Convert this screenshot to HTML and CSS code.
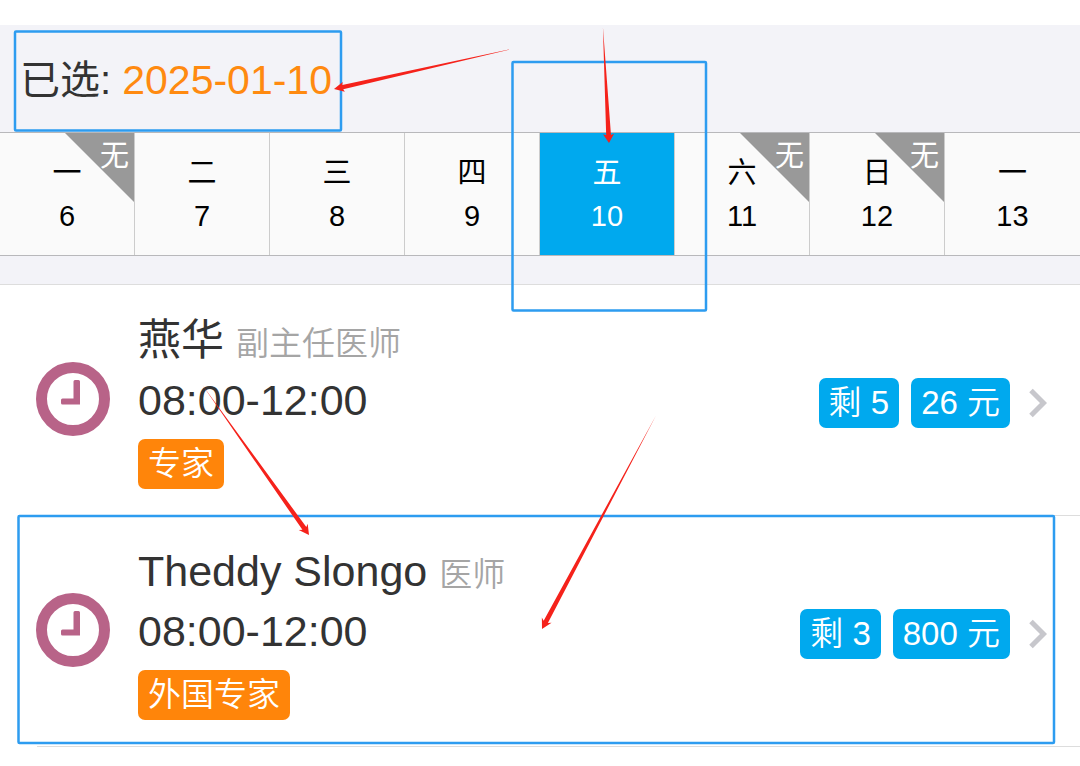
FILE: index.html
```html
<!DOCTYPE html>
<html lang="zh-Hans">
<head>
    <meta charset="UTF-8">
    <title>选择就诊时间</title>
    <meta name="viewport" content="width=device-width, initial-scale=1">
    <link rel="stylesheet" href="styles.css">
</head>
<body>
    <header class="selected">
        已选: <span class="selected-date">2025-01-10</span>
    </header>

    <nav class="week">
        <button class="day" type="button"><span>一</span><span>6</span><span class="none">无</span></button>
        <button class="day" type="button"><span>二</span><span>7</span></button>
        <button class="day" type="button"><span>三</span><span>8</span></button>
        <button class="day" type="button"><span>四</span><span>9</span></button>
        <button class="day active" type="button"><span>五</span><span>10</span></button>
        <button class="day" type="button"><span>六</span><span>11</span><span class="none">无</span></button>
        <button class="day" type="button"><span>日</span><span>12</span><span class="none">无</span></button>
        <button class="day" type="button"><span>一</span><span>13</span></button>
    </nav>

    <main class="list">
        <a class="item" href="#">
            <svg class="clock" viewBox="0 0 74 74">
                <circle cx="37" cy="37" r="31.5" fill="none" stroke="#b86388" stroke-width="11"/>
                <path d="M37.500 19.500Q37.500 18 39 18H42.500Q44 18 44 19.500V42.500H26.500Q25 42.500 25 41V38Q25 36.500 26.500 36.500H37.500Z" fill="#b86388"/>
            </svg>
            <div class="info">
                <div class="line">燕华 <span class="title">副主任医师</span></div>
                <div class="line">08:00-12:00</div>
                <span class="tag tag-expert">专家</span>
            </div>
            <div class="side">
                <span class="tag">剩 5</span>
                <span class="tag">26 元</span>
                <svg class="arrow" viewBox="0 0 18 30"><path d="M2 2.500L14.500 15L2 27.500" fill="none" stroke="#c7c7cc" stroke-width="5"/></svg>
            </div>
        </a>
        <a class="item" href="#">
            <svg class="clock" viewBox="0 0 74 74">
                <circle cx="37" cy="37" r="31.5" fill="none" stroke="#b86388" stroke-width="11"/>
                <path d="M37.500 19.500Q37.500 18 39 18H42.500Q44 18 44 19.500V42.500H26.500Q25 42.500 25 41V38Q25 36.500 26.500 36.500H37.500Z" fill="#b86388"/>
            </svg>
            <div class="info">
                <div class="line">Theddy Slongo <span class="title">医师</span></div>
                <div class="line">08:00-12:00</div>
                <span class="tag tag-expert">外国专家</span>
            </div>
            <div class="side">
                <span class="tag">剩 3</span>
                <span class="tag">800 元</span>
                <svg class="arrow" viewBox="0 0 18 30"><path d="M2 2.500L14.500 15L2 27.500" fill="none" stroke="#c7c7cc" stroke-width="5"/></svg>
            </div>
        </a>
    </main>

    <!-- 标注框和箭头 -->
    <svg class="marks" width="1080" height="766" viewBox="0 0 1080 766">
        <g fill="none" stroke="#2d9cf0" stroke-width="2.5">
            <rect x="15" y="31.500" width="326" height="99" rx="1"/>
            <rect x="512.500" y="62" width="193.500" height="248.500" rx="1"/>
            <rect x="18.500" y="516" width="1035.500" height="227" rx="1"/>
        </g>
        <g fill="#f5221b">
            <path transform="translate(334 89) rotate(-12.7)" d="M0 0L10 -5L9 -2.200L184 0L9 2.200L10 5Z"/>
            <path transform="translate(609 143) rotate(-93)" d="M0 0L9 -5.500L8 -2.400L116 0L8 2.400L9 5.500Z"/>
            <path transform="translate(309 535) rotate(-125.4)" d="M0 0L10 -5.500L8 -2.400L184 0L8 2.400L10 5.500Z"/>
            <path transform="translate(542 629) rotate(-61.9)" d="M0 0L10 -5.500L8 -2.400L242 0L8 2.400L10 5.500Z"/>
        </g>
    </svg>
</body>
</html>
```

FILE: styles.css
```css
* {
    box-sizing: border-box;
}
body {
    font-family: "Liberation Sans", "Noto Sans CJK SC", sans-serif;
    background-color: #fff;
    margin: 0;
    padding-top: 25px;
    color: #333;
    position: relative;
}
.selected {
    background-color: #f3f3f8;
    padding: 25px 20px 22px;
    font-size: 40px;
    line-height: 60px;
}
.selected-date {
    color: #ff8a10;
    font-size: 41px;
}
.week {
    display: grid;
    grid-template-columns: repeat(8, 1fr);
    border-top: 1px solid #b8b8bb;
    border-bottom: 1px solid #b8b8bb;
}
.day {
    position: relative;
    display: flex;
    flex-direction: column;
    align-items: center;
    margin: 0;
    padding: 19px 0 17px;
    border: 0;
    border-right: 1px solid #ccc;
    background-color: #fafafa;
    color: #000;
    font-family: inherit;
    font-size: 29px;
    line-height: 43px;
}
.day:last-child {
    border-right: 0;
}
.day.active {
    background-color: #00a9ee;
    color: #fff;
}
.none {
    position: absolute;
    top: 0;
    right: 0;
    width: 69px;
    height: 69px;
    padding: 2px 5px 0 0;
    background-color: #999;
    clip-path: polygon(0 0, 100% 0, 100% 100%);
    color: #fff;
    text-align: right;
}
.list {
    border-top: 28px solid #f3f3f8;
}
.item {
    position: relative;
    display: flex;
    align-items: center;
    padding: 25px 33px 27px 36px;
    color: inherit;
    text-decoration: none;
}
.item::after {
    content: "";
    position: absolute;
    left: 37px;
    right: 0;
    bottom: 0;
    border-bottom: 1px solid #ddd;
}
.item:first-child {
    border-top: 1px solid #ddd;
}
.clock {
    width: 74px;
    height: 74px;
    margin: 0 28px 2px 0;
    flex: none;
}
.info {
    flex: 1;
}
.line {
    font-size: 43px;
    line-height: 60px;
}
.title {
    color: #a5a5a5;
    font-size: 33px;
    font-weight: 350;
    line-height: 40px;
}
.tag {
    display: inline-block;
    padding: 0 10px;
    border-radius: 7px;
    background-color: #00a9ee;
    color: #fff;
    font-size: 33px;
    font-weight: 350;
    line-height: 50px;
}
.tag-expert {
    display: block;
    width: fit-content;
    margin-top: 9px;
    background-color: #ff850a;
}
.side {
    display: flex;
    align-items: center;
    gap: 12px;
    padding-top: 6px;
}
.arrow {
    width: 18px;
    height: 30px;
    margin-left: 7px;
}
.marks {
    position: absolute;
    top: 0;
    left: 0;
    pointer-events: none;
}
```
